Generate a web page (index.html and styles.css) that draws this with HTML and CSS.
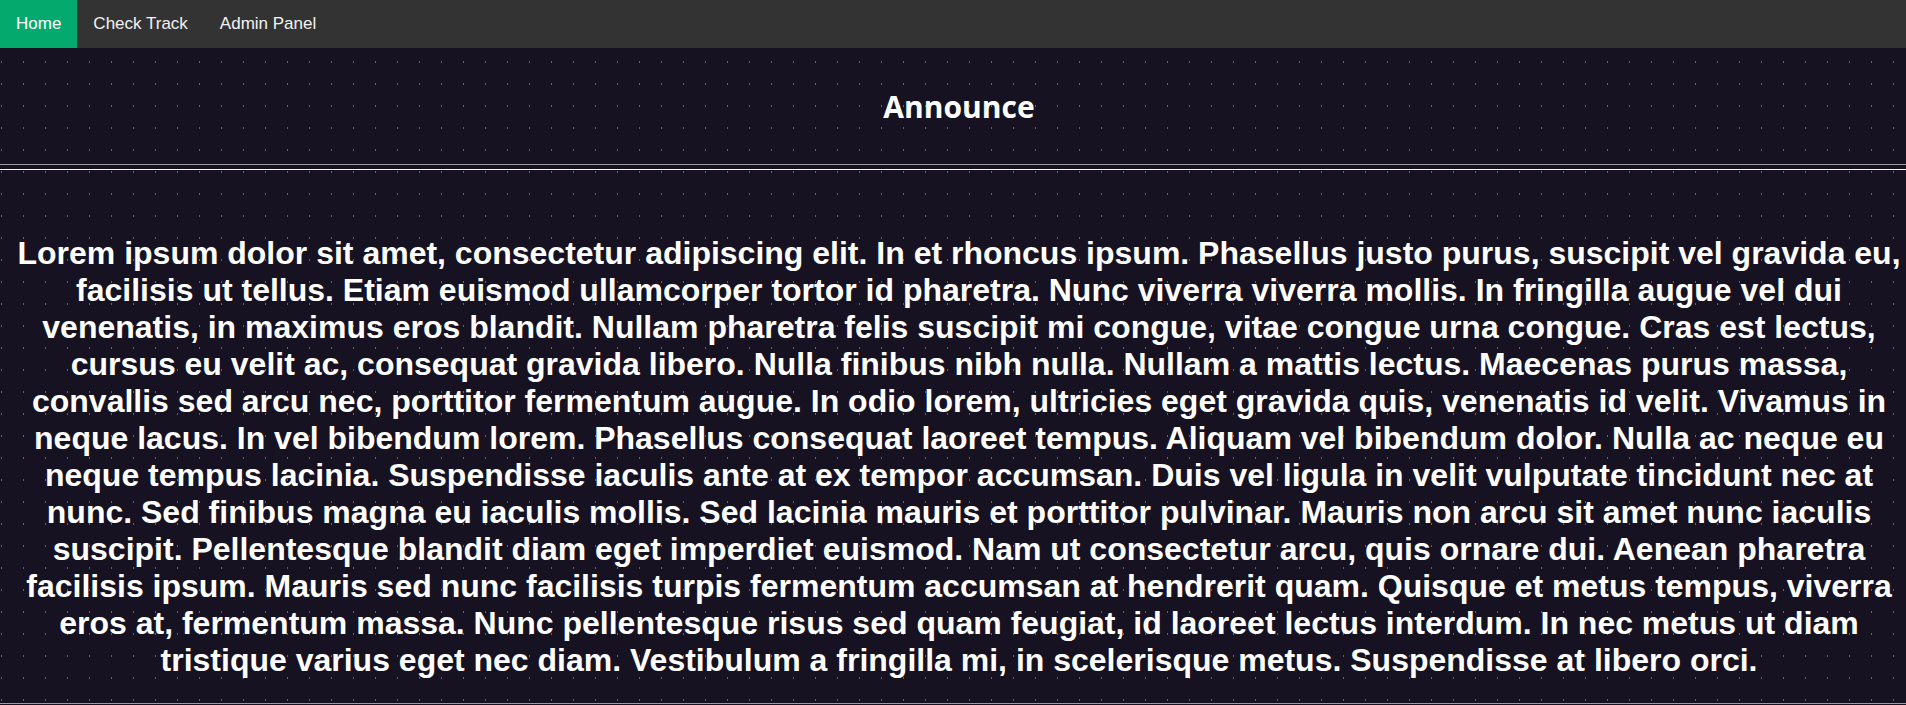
FILE: index.html
```html
<!DOCTYPE html>
<html lang="en">
<head>
<meta charset="utf-8">
<title>Announce</title>
<link rel="stylesheet" href="styles.css">
</head>
<body>
<nav class="topnav">
  <a class="nav-link active" href="#">Home</a>
  <a class="nav-link" href="#">Check Track</a>
  <a class="nav-link" href="#">Admin Panel</a>
</nav>
<main class="content">
  <h1 class="title">Announce</h1>
  <hr class="rule">
  <p class="announcement">Lorem ipsum dolor sit amet, consectetur adipiscing elit. In et rhoncus ipsum. Phasellus justo purus, suscipit vel gravida eu, facilisis ut tellus. Etiam euismod ullamcorper tortor id pharetra. Nunc viverra viverra mollis. In fringilla augue vel dui venenatis, in maximus eros blandit. Nullam pharetra felis suscipit mi congue, vitae congue urna congue. Cras est lectus, cursus eu velit ac, consequat gravida libero. Nulla finibus nibh nulla. Nullam a mattis lectus. Maecenas purus massa, convallis sed arcu nec, porttitor fermentum augue. In odio lorem, ultricies eget gravida quis, venenatis id velit. Vivamus in neque lacus. In vel bibendum lorem. Phasellus consequat laoreet tempus. Aliquam vel bibendum dolor. Nulla ac neque eu neque tempus lacinia. Suspendisse iaculis ante at ex tempor accumsan. Duis vel ligula in velit vulputate tincidunt nec at nunc. Sed finibus magna eu iaculis mollis. Sed lacinia mauris et porttitor pulvinar. Mauris non arcu sit amet nunc iaculis suscipit. Pellentesque blandit diam eget imperdiet euismod. Nam ut consectetur arcu, quis ornare dui. Aenean pharetra facilisis ipsum. Mauris sed nunc facilisis turpis fermentum accumsan at hendrerit quam. Quisque et metus tempus, viverra eros at, fermentum massa. Nunc pellentesque risus sed quam feugiat, id laoreet lectus interdum. In nec metus ut diam tristique varius eget nec diam. Vestibulum a fringilla mi, in scelerisque metus. Suspendisse at libero orci.</p>
  <hr class="rule">
</main>
</body>
</html>
```
FILE: styles.css
```css
html {
  background-color: #161222;
  background-image: url("data:image/svg+xml,%3Csvg xmlns='http://www.w3.org/2000/svg' width='22' height='22'%3E%3Crect x='1' y='17' width='1' height='2' fill='%23656270'/%3E%3C/svg%3E");
  background-size: 22px 22px;
  background-position: 0 0;
}

body {
  margin: 0;
  color: #ffffff;
  font-family: "Liberation Sans", Arial, sans-serif;
}

.topnav {
  display: flex;
  background-color: #333333;
}

.nav-link {
  display: block;
  padding: 14px 16px;
  color: #f2f2f2;
  text-decoration: none;
  font-size: 17px;
}

.nav-link.active {
  background-color: #04aa6d;
  color: #ffffff;
}

.content {
  padding: 0 2px 0 14px;
}

.title {
  margin: 38px 0 37px;
  text-align: center;
  font-family: "Open Sans", "Noto Sans", sans-serif;
  font-weight: 700;
  font-size: 30px;
  color: #ffffff;
}

.rule {
  height: 4px;
  margin: 0 -2px 0 -14px;
  border: 0;
  border-top: 1px solid #9c9c9c;
  border-bottom: 1px solid #ffffff;
}

.announcement {
  margin: 65px 0 24px;
  text-align: center;
  font-size: 32px;
  font-weight: 700;
}
```
